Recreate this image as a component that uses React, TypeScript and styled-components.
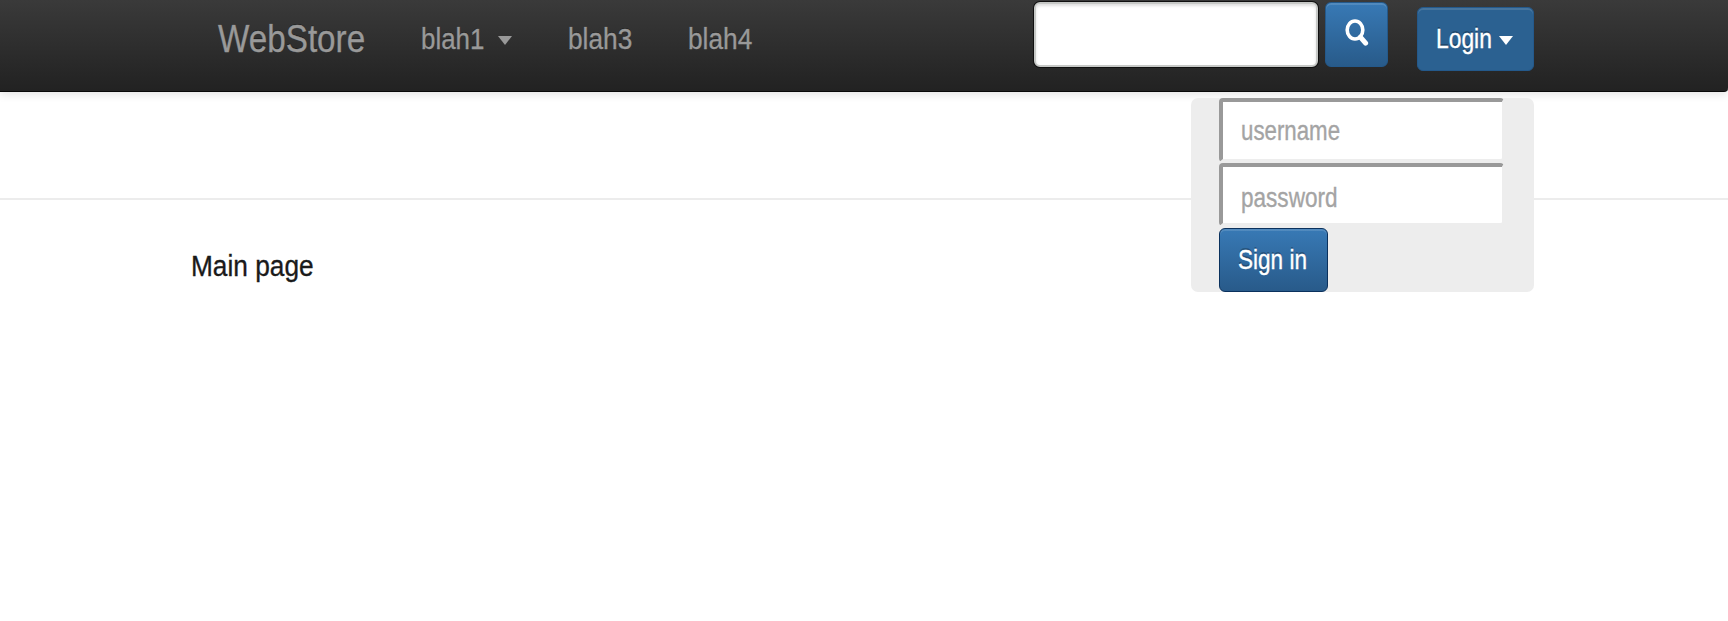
import React from 'react';
import styled, { createGlobalStyle, css } from 'styled-components';

const GlobalStyle = createGlobalStyle`
  * { box-sizing: border-box; }
  html, body { margin: 0; background: #fff; }
  body {
    font-family: "Liberation Sans", Arial, Helvetica, sans-serif;
    color: #1a1a1a;
    overflow: hidden;
  }
`;

/* A line of text set in a narrowed face; $width is the room it takes in the layout. */
const Label = styled.span<{ $size: number; $narrow: number; $width: number; $lift?: number }>`
  display: block;
  flex: none;
  width: ${p => p.$width}px;
  margin-top: ${p => -(p.$lift ?? 0)}px;
  font-size: ${p => p.$size}px;
  line-height: 40px;
  white-space: nowrap;
  transform: scaleX(${p => p.$narrow});
  transform-origin: 0 50%;
  -webkit-text-stroke: 0.35px currentColor;
`;

const Page = styled.div`
  min-height: 621px;
`;

const Navbar = styled.header`
  position: relative;
  display: flex;
  align-items: flex-start;
  justify-content: space-between;
  height: 92px;
  padding: 0 194px 0 218px;
  background: linear-gradient(#3a3a3a, #222 90px);
  border-bottom: 1.5px solid #080808;
  border-radius: 0 0 4px 0;
  box-shadow: 0 2px 10px rgba(0, 0, 0, 0.12);
`;

const Nav = styled.nav`
  display: flex;
  padding-top: 19px;
  color: #999;
  text-shadow: 0 -1px 0 rgba(0, 0, 0, 0.4);
`;

const Brand = styled.div`
  margin-right: 56px;
`;

const NavItem = styled.a`
  display: flex;
  align-items: center;
  color: inherit;
  margin-right: 56px;
`;

const Caret = styled.i<{ $gap: number }>`
  width: 0;
  height: 0;
  margin: 2px 0 0 ${p => p.$gap}px;
  border: solid transparent;
  border-width: 9px 7.5px 0;
  border-top-color: currentColor;
`;

const Tools = styled.div`
  display: flex;
  align-items: flex-start;
`;

const SearchField = styled.input`
  width: 284px;
  height: 65px;
  margin: 2px 8px 0 0;
  padding: 0 18px;
  font: 27px "Liberation Sans", Arial, sans-serif;
  background: #fff;
  border: 2px solid #c6c8c6;
  border-radius: 6px;
  outline: none;
  box-shadow: 0 0 0 1px #101010, inset 0 2px 3px rgba(0, 0, 0, 0.13);
`;

const Button = styled.button<{ $kind: 'search' | 'login' | 'submit' }>`
  display: flex;
  align-items: center;
  padding: 0;
  color: #fff;
  font-family: inherit;
  border: 1px solid #24598b;
  border-radius: 6px;
  background: linear-gradient(#387ab6, #285a89) border-box;
  box-shadow: inset 0 2px 0 rgba(255, 255, 255, 0.13);
  text-shadow: 0 -2px 0 rgba(0, 0, 0, 0.25);
  ${p => p.$kind === 'search' && css`
    justify-content: center;
    width: 63px;
    height: 65px;
    margin: 2px 29px 0 -1px;
  `}
  ${p => p.$kind === 'login' && css`
    width: 117px;
    height: 64px;
    margin-top: 7px;
    padding-left: 18px;
    background: #2b6191;
  `}
  ${p => p.$kind === 'submit' && css`
    width: 109px;
    height: 64px;
    padding-left: 18.5px;
    border: 1.5px solid #0a315d;
  `}
`;

const SearchIcon = styled.svg`
  margin: -4px 0 0 1px;
`;

const Dropdown = styled.form`
  position: absolute;
  top: 98px;
  left: 1190.5px;
  width: 343.5px;
  height: 194px;
  padding-left: 28px;
  background: #ededed;
  border-radius: 7px;
`;

const Field = styled.div<{ $height: number; $gap: number }>`
  display: flex;
  align-items: center;
  width: 285.5px;
  height: ${p => p.$height}px;
  margin-bottom: ${p => p.$gap}px;
  padding-left: 18px;
  color: #a4a4a4;
  background: #fff;
  border-style: solid;
  border-color: #999 #ededed #ededed #999;
  border-width: 4px 2px 3px 4px;
  border-radius: 4px;
`;

const Subheader = styled.div`
  height: 108px;
  border-bottom: 2px solid #ececec;
`;

const Main = styled.main`
  padding: 46px 0 0 190.5px;
`;

export default function App() {
  return (
    <Page>
      <GlobalStyle />
      <Navbar>
        <Nav>
          <Brand><Label $size={38.5} $narrow={0.863} $width={147}>WebStore</Label></Brand>
          <NavItem>
            <Label $size={30} $narrow={0.863} $width={63}>blah1</Label>
            <Caret $gap={14} />
          </NavItem>
          <NavItem><Label $size={30} $narrow={0.875} $width={64}>blah3</Label></NavItem>
          <NavItem><Label $size={30} $narrow={0.875} $width={64}>blah4</Label></NavItem>
        </Nav>
        <Tools>
          <SearchField aria-label="Search" />
          <Button $kind="search" aria-label="Search">
            <SearchIcon width="24" height="28" viewBox="0 0 24 28" fill="none" stroke="#fff">
              <ellipse cx="10" cy="11" rx="7.8" ry="9" strokeWidth="3.6" />
              <path d="M15.4 18.2L20.6 24.2" strokeWidth="5" strokeLinecap="round" />
            </SearchIcon>
          </Button>
          <Button $kind="login">
            <Label $size={27} $narrow={0.845} $width={56}>Login</Label>
            <Caret $gap={7} />
          </Button>
        </Tools>
        <Dropdown>
          <Field $height={64} $gap={1}>
            <Label $size={27.5} $narrow={0.81} $width={100}>username</Label>
          </Field>
          <Field $height={63} $gap={2}>
            <Label $size={27.5} $narrow={0.82} $width={100} $lift={-5}>password</Label>
          </Field>
          <Button $kind="submit" type="button">
            <Label $size={27.5} $narrow={0.82} $width={70}>Sign in</Label>
          </Button>
        </Dropdown>
      </Navbar>
      <Subheader />
      <Main>
        <Label $size={30} $narrow={0.875} $width={124}>Main page</Label>
      </Main>
    </Page>
  );
}
